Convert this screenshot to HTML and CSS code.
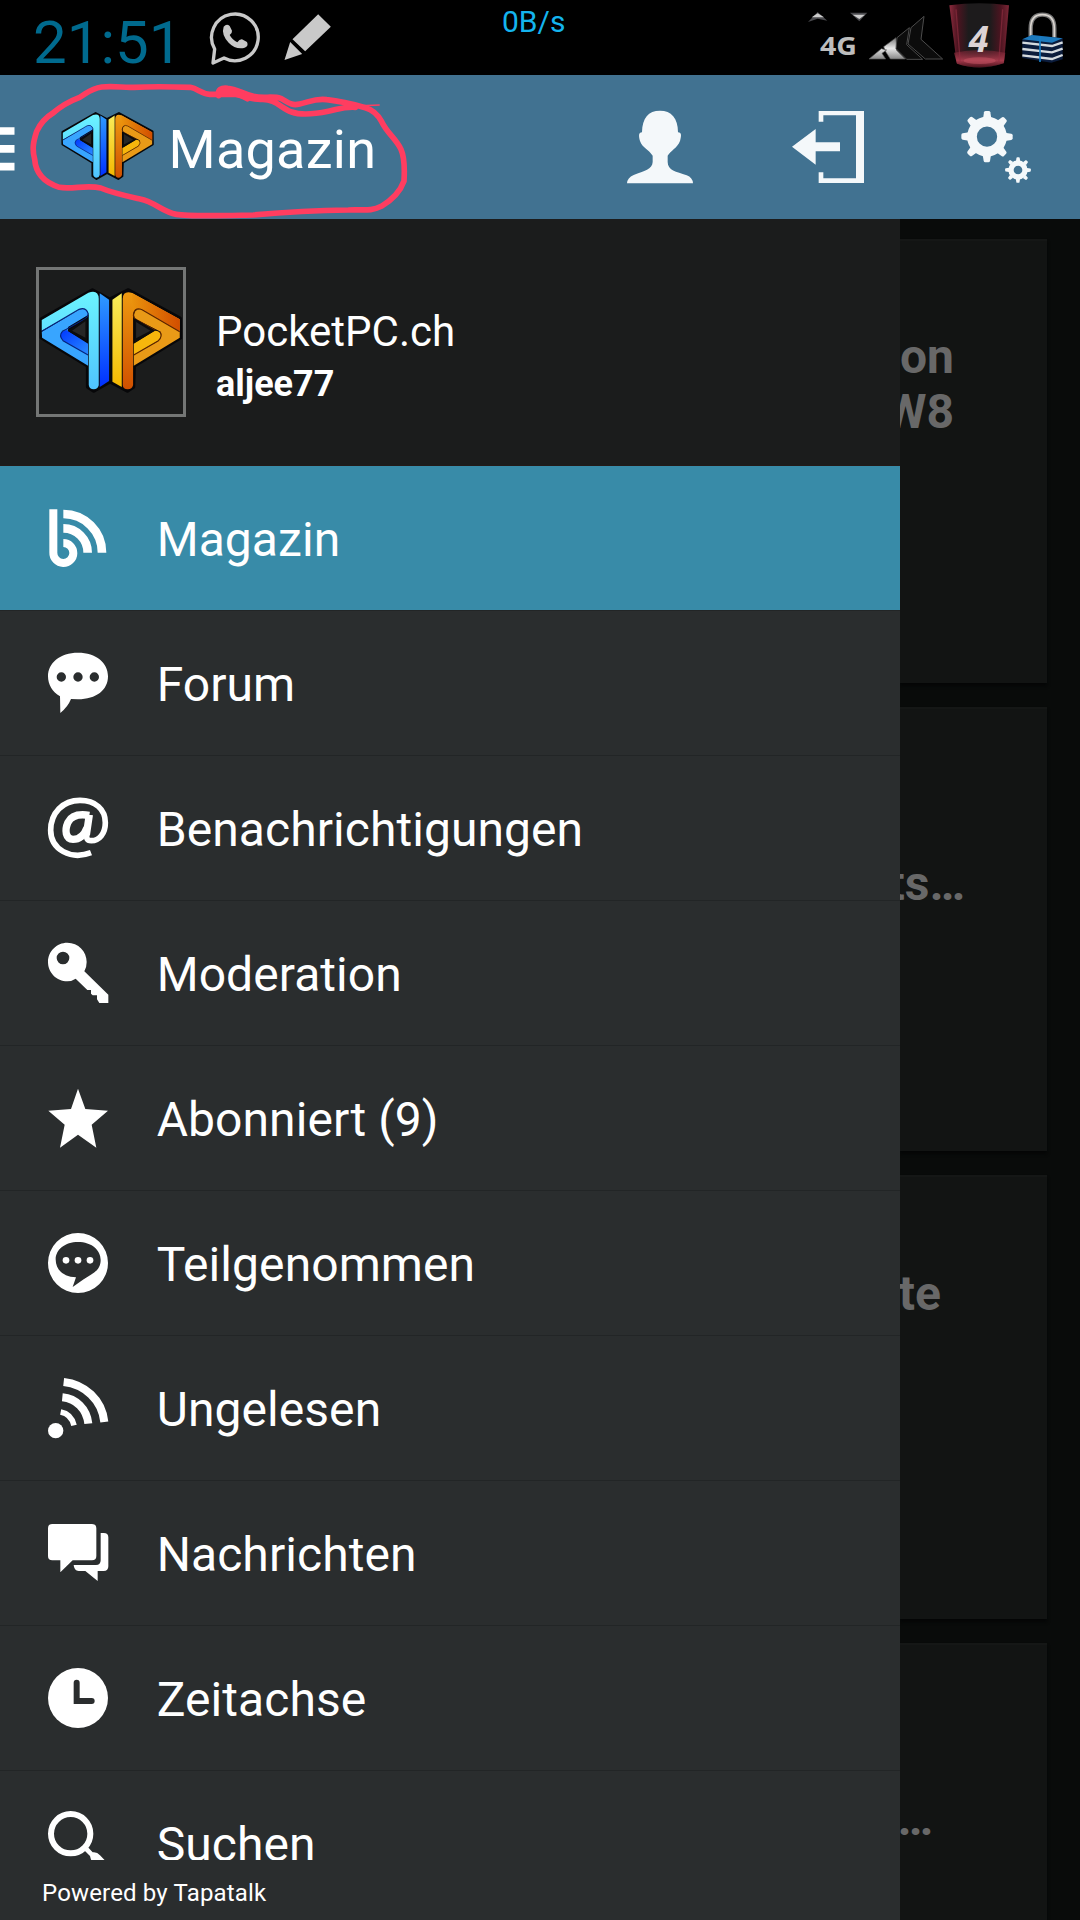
FILE: index.html
```html
<!DOCTYPE html>
<html lang="de">
<head>
<meta charset="utf-8">
<title>PocketPC.ch</title>
<link rel="stylesheet" href="styles.css">
</head>
<body>
<svg class="defs" aria-hidden="true">
  <defs>
    <linearGradient id="b1" x1="0" y1="0" x2="0" y2="1"><stop offset="0" stop-color="#6cf4ff"/><stop offset="1" stop-color="#4fc3ff"/></linearGradient>
    <linearGradient id="b2" x1="0" y1="0" x2="0" y2="1"><stop offset="0" stop-color="#2f9bff"/><stop offset="1" stop-color="#0030ff"/></linearGradient>
    <linearGradient id="b3" x1="0" y1="0" x2="1" y2="1"><stop offset="0" stop-color="#0038ff"/><stop offset="1" stop-color="#2a8cff"/></linearGradient>
    <linearGradient id="o1" x1="0" y1="0" x2="0" y2="1"><stop offset="0" stop-color="#f9ec5a"/><stop offset="1" stop-color="#f5b800"/></linearGradient>
    <linearGradient id="o2" x1="0" y1="0" x2="0" y2="1"><stop offset="0" stop-color="#ee9a10"/><stop offset="1" stop-color="#d05000"/></linearGradient>
    <linearGradient id="o3" x1="0" y1="0" x2="1" y2="0"><stop offset="0" stop-color="#ea920c"/><stop offset="1" stop-color="#d24e00"/></linearGradient>
    <linearGradient id="glass" x1="0" y1="0" x2="1" y2="0"><stop offset="0" stop-color="#8c2b3d"/><stop offset=".14" stop-color="#4c1420"/><stop offset=".32" stop-color="#1d1b1c"/><stop offset=".68" stop-color="#1d1b1c"/><stop offset=".86" stop-color="#4c1420"/><stop offset="1" stop-color="#7c2636"/></linearGradient>
    <linearGradient id="liquid" x1="0" y1="0" x2="0" y2="1"><stop offset="0" stop-color="#7c2535" stop-opacity=".5"/><stop offset=".6" stop-color="#a33a4b"/><stop offset="1" stop-color="#4a111b"/></linearGradient>
    <linearGradient id="chrome" x1="0" y1="0" x2="0" y2="1"><stop offset="0" stop-color="#777"/><stop offset=".5" stop-color="#e8e8e8"/><stop offset="1" stop-color="#888"/></linearGradient>
    <symbol id="logo" viewBox="118 203 430 315">
      <path d="M278 209 L330 237 L386 209 L541 294 L542 352 L403 437 L401 500 L383 512 L331 484 L282 512 L264 500 L264 437 L125 352 L125 296Z" fill="#070709" stroke="#070709" stroke-width="11" stroke-linejoin="round"/>
      <path d="M126 331 L126 299 L266 217 Q296 207 297 235 V495 Q294 507 282 507 Q269 507 267 494 V283 Q262 262 242 267Z" fill="url(#b1)"/>
      <path d="M126 334 L238 268 Q262 260 266 283 L205 320 V333 L265 404 V436 L127 352Z" fill="#38a5ff"/>
      <path d="M182 345 Q181 334 200 329 L265 370 V404 L190 361 Q182 355 182 345Z" fill="url(#b3)"/>
      <path d="M300 219 L328 238 V482 L300 500Z" fill="url(#b2)"/>
      <path d="M126 333 L238 267 Q258 260 265 279 M265 404 L190 361 Q176 346 188 333 L200 327 L255 296 Q265 290 265 279" fill="none" stroke="#06247c" stroke-width="3.5"/>
      <path d="M338 238 L366 219 V500 L338 484Z" fill="url(#o1)"/>
      <path d="M369 235 Q370 210 397 218 L540 297 V334 L427 268 Q402 258 400 283 V494 Q397 507 384 507 Q370 507 369 494Z" fill="url(#o2)"/>
      <path d="M397 218 L540 297 V334 L427 268 Q405 262 399 280Z" fill="url(#o3)"/>
      <path d="M540 334 V352 L402 436 V404 L477 361 Q489 347 480 333 L403 294 Q399 265 425 267Z" fill="#e99a17"/>
      <path d="M402 370 L464 331 Q483 331 484 345 Q484 356 474 362 L402 404Z" fill="#f7b60c"/>
      <path d="M540 334 L427 268 Q403 258 401 285 Q402 294 412 299 L467 330 M402 404 L476 361 Q490 347 480 333" fill="none" stroke="#5c2500" stroke-width="3.5"/>
      <path d="M262 292 V365 L203 331Z M404 294 V368 L466 331Z" fill="#0c0c0d"/>
      <path d="M257 303 V352 L217 331Z M409 305 V354 L452 331Z" fill="#262626"/>
    </symbol>
  </defs>
</svg>

<div class="screen">
  <div class="status">
    <span class="clock">21:51</span>
    <svg class="whatsapp" viewBox="628 30 156 168">
      <path d="M645 147 A70 70 0 1 1 673 174 L640 189Z" fill="none" stroke="#c9c9c9" stroke-width="10" stroke-linejoin="round"/>
      <path d="M672 80 Q681 70 690 78 L697 92 Q698 99 690 105 Q699 121 713 127 Q720 117 727 118 L742 126 Q748 139 733 144 Q707 149 687 128 Q664 103 672 80Z" fill="#c9c9c9"/>
    </svg>
    <svg class="pencil" viewBox="850 40 146 144">
      <path d="M955 44 L993 81 L916 155 L878 119Z M871 127 L907 163 L854 181Z" fill="#c9c9c9"/>
    </svg>
    <span class="rate">0B/s</span>
    <svg class="tray" viewBox="225 0 795 225">
      <path d="M234 66 L263 36 L292 62 L263 56Z" fill="#4a4a4e"/><path d="M245 52 L263 40 L282 52Z" fill="#ccc"/>
      <path d="M360 38 H412 L388 64Z" fill="#4a4a4e"/><path d="M368 44 H405 L388 57Z" fill="#ccc"/>
      <text x="270" y="165" class="net" textLength="111" lengthAdjust="spacingAndGlyphs">4G</text>
      <path d="M417 177 L454 146 L470 150 L456 160 L467 177Z M461 140 L498 113 L500 151 L526 177 H481 L467 155Z" fill="url(#chrome)" stroke="#555" stroke-width="2"/>
      <path d="M501 113 L538 83 L530 134 L578 178 H530 L498 146Z M543 83 L582 49 L573 118 L638 177 H586 L534 132Z" fill="#0c0c0c" stroke="#4c4c4c" stroke-width="3"/>
      <path d="M658 16 Q748 4 837 16 L822 189 Q748 216 680 190Z" fill="url(#glass)"/>
      <path d="M672 158 Q748 142 826 158 L821 190 Q748 214 681 191Z" fill="url(#liquid)"/>
      <ellipse cx="749" cy="182" rx="48" ry="10" fill="#c0505f" opacity=".6"/>
      <path d="M678 28 L691 190 M818 28 L806 190" stroke="#932f42" stroke-width="4" opacity=".6"/>
      <text x="716" y="157" class="battery">4</text>
      <path d="M902 118 V86 Q902 44 937 44 Q973 44 973 86 V118" fill="none" stroke="#777" stroke-width="13"/>
      <path d="M902 118 V86 Q902 44 937 44 Q973 44 973 86 V118" fill="none" stroke="#d9d4cf" stroke-width="5"/>
      <path d="M877 118 L906 105 L998 115 V178 L964 188 L877 174Z" fill="#0b1c3c"/>
      <path d="M877 118 L906 105 L998 115 L966 128Z" fill="#1c79bd"/>
      <path d="M877 128 L966 138 L998 127 M877 147 L966 157 L998 146 M877 166 L966 177 L998 165" fill="none" stroke="#d5dade" stroke-width="7"/>
      <path d="M930 110 V186" stroke="#1b7fc4" stroke-width="5"/>
    </svg>
  </div>

  <div class="appbar">
    <svg class="burger" viewBox="0 0 44 132"><path d="M0 0H44V23H0ZM0 54H44V77H0ZM0 108H44V131H0Z" fill="#fff"/></svg>
    <svg class="brand"><use href="#logo"/></svg>
    <h1 class="title">Magazin</h1>
    <div class="actions">
      <svg viewBox="582 333 216 216"><path d="M690 332 C724 332 744 354 744 397 C756 397 754 409 750 423 C742 444 722 452 713 467 V486 C713 511 738 515 770 526 Q788 533 789 550 H591 Q592 533 611 525 C643 513 667 507 668 486 V467 C655 447 638 445 630 423 C626 409 625 397 636 397 C637 354 655 332 690 332Z"/></svg>
      <svg viewBox="187 333 216 216"><path d="M267 333H403V549H267V517H281V535H379V346H281V365H267Z M187 440 L258 387V427H331V454H258V494Z"/></svg>
      <svg viewBox="690 333 216 216">
        <circle cx="771" cy="410" r="45" fill="none" stroke="#f4f8fa" stroke-width="29"/>
        <g id="teeth"><path id="tooth" d="M759 356 L762 337 Q763 333 767 333 H776 Q780 333 781 337 L784 356Z"/><use href="#tooth" transform="rotate(45 771 410)"/><use href="#tooth" transform="rotate(90 771 410)"/><use href="#tooth" transform="rotate(135 771 410)"/><use href="#tooth" transform="rotate(180 771 410)"/><use href="#tooth" transform="rotate(225 771 410)"/><use href="#tooth" transform="rotate(270 771 410)"/><use href="#tooth" transform="rotate(315 771 410)"/></g>
        <circle cx="864" cy="510" r="21" fill="none" stroke="#f4f8fa" stroke-width="16"/>
        <use href="#teeth" transform="translate(864 510) scale(.5) translate(-771 -410)"/>
      </svg>
    </div>
    <svg class="scribble" viewBox="0 225 1290 432">
      <path d="M656 287 C652 268 664 263 683 265 C711 267 728 282 760 289 C790 296 819 287 842 295 C865 307 873 318 899 312 C928 306 947 294 980 299 C1017 303 1057 312 1096 323 C1118 329 1134 344 1145 365 C1162 400 1189 417 1203 448 C1215 475 1214 509 1212 543 C1200 577 1177 599 1144 619 C1112 635 1090 628 1045 630 C930 631 845 637 760 645 C660 647 570 650 529 643 C488 636 465 606 420 597 C375 587 337 579 302 564 C260 553 218 569 178 562 C130 547 107 518 104 478 C95 445 101 422 110 394 C123 366 141 350 159 339 C182 319 207 304 239 292 C263 278 273 266 305 261 C348 257 370 264 401 262 C459 259 514 260 571 262 C594 266 603 281 629 283 H705 C740 290 750 299 785 298 C826 296 846 327 875 336 C908 348 956 340 985 334 C1015 328 1030 320 1066 322" fill="none" stroke="#ff3d60" stroke-width="17" stroke-linecap="round" stroke-linejoin="round"/>
      <path d="M662 275 Q705 272 742 295" fill="none" stroke="#ff3d60" stroke-width="19" stroke-linecap="round"/>
      <path d="M1060 318 L1139 315" stroke="#ff3d60" stroke-width="5"/>
    </svg>
  </div>

  <div class="main">
    <div class="drawer">
      <div class="profile">
        <div class="avatar"><svg><use href="#logo"/></svg></div>
        <div class="who"><div class="site">PocketPC.ch</div><div class="user">aljee77</div></div>
      </div>
      <ul class="menu">
        <li class="item active"><svg viewBox="144 144 180 180"><path d="M160 148 V278 A30 30 0 1 0 190 249" class="line b"/><path d="M190 205 A73 73 0 0 1 263 278 M190 162 A116 116 0 0 1 306 278" class="line r"/></svg><span>Magazin</span></li>
        <li class="item"><svg viewBox="144 579 180 180"><path fill-rule="evenodd" d="M234 578 C289 578 324 609 324 649 C324 690 289 718 234 718 L213 717 Q204 740 181 759 L180 709 C157 696 144 674 144 649 C144 609 180 578 234 578Z M170 651a14 14 0 1 0 28 0a14 14 0 1 0 -28 0Z M220 651a14 14 0 1 0 28 0a14 14 0 1 0 -28 0Z M269 651a14 14 0 1 0 28 0a14 14 0 1 0 -28 0Z"/></svg><span>Forum</span></li>
        <li class="item"><svg viewBox="144 114 180 180"><path d="M273 278 C213 301 152 269 152 211 C152 158 189 121 240 121 C286 121 316 148 316 188 C316 220 298 242 274 242 C260 242 258 234 261 219" class="line at"/><path d="M268 166 Q218 158 204 187 C193 212 197 238 219 238 C240 238 254 222 261 203 M268 164 L259 225" class="line bowl"/></svg><span>Benachrichtigungen</span></li>
        <li class="item"><svg viewBox="144 549 180 180"><path fill-rule="evenodd" d="M202 548 C235 548 260 574 260 606 Q260 623 253 634 L325 704 V729 H298 L291 718 V706 H278 L273 701 V690 H262 L227 656 Q215 664 202 664 C170 664 144 638 144 606 C144 574 170 548 202 548Z M170 594a19 19 0 1 0 38 0a19 19 0 1 0 -38 0Z"/></svg><span>Moderation</span></li>
        <li class="item"><svg viewBox="144 84 180 180"><path d="M234 86 L256 147 L324 152 L275 194 L289 263 L234 224 L180 263 L194 194 L145 152 L213 147Z"/></svg><span>Abonniert (9)</span></li>
        <li class="item"><svg viewBox="144 519 180 180"><path fill-rule="evenodd" d="M144 609a90 90 0 1 0 180 0a90 90 0 1 0 -180 0Z M234 546 C275 546 302 570 302 600 C302 633 275 642 251 658 L218 681 L228 652 C190 650 167 630 167 598 C167 569 195 546 234 546Z"/><circle cx="198" cy="601" r="10"/><circle cx="234" cy="601" r="10"/><circle cx="270" cy="601" r="10"/></svg><span>Teilgenommen</span></li>
        <li class="item"><svg viewBox="144 114 180 180"><circle cx="167" cy="272" r="23"/><path d="M182 216 Q214 222 222 256" class="line s"/><path d="M187 172 C228 176 260 206 265 251 M191 126 C254 133 306 179 313 246" class="line w"/></svg><span>Ungelesen</span></li>
        <li class="item"><svg viewBox="144 549 180 180"><path d="M156 552H276Q289 552 289 565V648Q289 661 276 661H218L181 697V661H157Q144 661 144 648V565Q144 552 156 552Z M302 579H311Q325 579 325 592V679Q325 693 311 693H293V723L256 693H236Q222 692 221 675H288Q302 675 302 661Z"/></svg><span>Nachrichten</span></li>
        <li class="item"><svg viewBox="144 144 180 180"><circle cx="234" cy="234" r="90"/><path d="M230 188V243H275" class="hands"/></svg><span>Zeitachse</span></li>
        <li class="item"><svg viewBox="144 579 180 180"><circle cx="212" cy="641" r="59" fill="none" stroke="#fff" stroke-width="18"/><path d="M252 690 L264 682 L278 697 Q291 695 300 706 L337 744 L318 763 L273 719 L270 708Z"/></svg><span>Suchen</span></li>
      </ul>
      <div class="footer">Powered by Tapatalk</div>
    </div>
    <div class="feed">
      <div class="card first"><p>on<br>W8</p></div>
      <div class="card second"><p>ts…</p></div>
      <div class="card third"><p>te</p></div>
      <div class="card fourth"><p>…</p></div>
    </div>
  </div>
</div>
</body>
</html>
```

FILE: styles.css
```css
* { box-sizing: border-box; }
body { margin: 0; background: #000; font-family: Roboto, "Noto Sans", sans-serif; color: #fff; }
svg { display: block; flex: none; overflow: visible; }
.defs { position: absolute; width: 0; height: 0; }
.screen { width: 1080px; height: 1920px; display: flex; flex-direction: column; overflow: hidden; }

.status { height: 75px; flex: none; display: flex; background: #000; }
.clock { width: 142px; margin-left: 33px; font-size: 60px; line-height: 85px; color: #006a8e; white-space: nowrap; }
.whatsapp { width: 52px; height: 56px; margin: 10px 0 0 34px; }
.pencil { width: 49px; height: 48px; margin: 13px 0 0 22px; }
.rate { width: 80px; margin-left: 170px; font-size: 30px; line-height: 44px; color: #14b4ee; white-space: nowrap; }
.tray { width: 265px; height: 75px; margin-left: auto; margin-right: 10px; }
.net { font: bold 76px "Open Sans", sans-serif; fill: #bdbdbd; }
.battery { font: italic bold 108px "Open Sans", sans-serif; fill: #dcd3d5; }

.appbar { position: relative; height: 144px; flex: none; display: flex; align-items: center; background: #417291; }
.burger { width: 14.5px; height: 44px; margin-top: 4px; }
.brand { width: 93px; height: 68px; margin-left: 46.5px; margin-bottom: 2px; }
.title { margin: 0 0 0 14.5px; font-size: 54px; font-weight: 400; line-height: 144px; letter-spacing: .25px; padding-top: 5px; }
.actions { display: flex; gap: 96px; margin-left: auto; margin-right: 48px; }
.actions svg { width: 72px; height: 72px; fill: #f4f8fa; }
.scribble { position: absolute; left: 0; top: 0; width: 430px; height: 144px; }

.main { flex: 1; display: flex; min-height: 0; background: #090b0a; }
.drawer { width: 900px; flex: none; display: flex; flex-direction: column; background: #2a2d2e; }
.profile { height: 247px; flex: none; display: flex; gap: 30px; padding: 48px 36px; background: #1b1c1c; border-bottom: 1px solid #231a18; }
.avatar { width: 150px; height: 150px; border: 3px solid #747675; }
.avatar svg { width: 143.5px; height: 105px; margin-top: 18px; }
.who { padding-top: 37px; }
.site { font-size: 42px; line-height: 56px; }
.user { font-size: 36px; font-weight: 700; line-height: 48px; }

.menu { flex: 1; min-height: 0; overflow: hidden; margin: 0; padding: 0; list-style: none; }
.item { height: 145px; display: flex; align-items: center; gap: 48px; padding-left: 48px; border-bottom: 1px solid #222526; font-size: 48px; letter-spacing: .07px; }
.item span { padding: 3px 0 0 .7px; }
.item svg { width: 60px; height: 60px; fill: #fff; }
.active { background: #388ba8; }
.item .line { fill: none; stroke: #fff; }
.item .b { stroke-width: 24px; }
.item .r { stroke-width: 26px; }
.item .w { stroke-width: 24px; }
.item .s { stroke-width: 17px; }
.item .at { stroke-width: 17px; }
.item .bowl { stroke-width: 22px; }
.hands { fill: none; stroke: #2a2d2e; stroke-width: 18px; stroke-linecap: round; }
.footer { height: 60px; flex: none; padding-left: 42px; font-size: 24px; line-height: 66px; letter-spacing: .16px; }

.feed { width: 180px; display: flex; flex-direction: column; gap: 24px; padding: 20px 33px 0 0; overflow: hidden; }
.card { height: 444px; flex: none; display: flex; justify-content: flex-end; overflow: hidden; background: #121413; border-top: 2px solid #151716; box-shadow: 0 3px 3px #050606; color: #686868; font-size: 48px; font-weight: 700; line-height: 55px; text-align: right; }
.card p { margin: 0; white-space: nowrap; }
.first p { padding: 88px 93px 0 0; }
.second p { padding: 147px 82px 0 0; }
.third p { padding: 89px 106px 0 0; }
.fourth p { padding: 146px 114px 0 0; }
```
